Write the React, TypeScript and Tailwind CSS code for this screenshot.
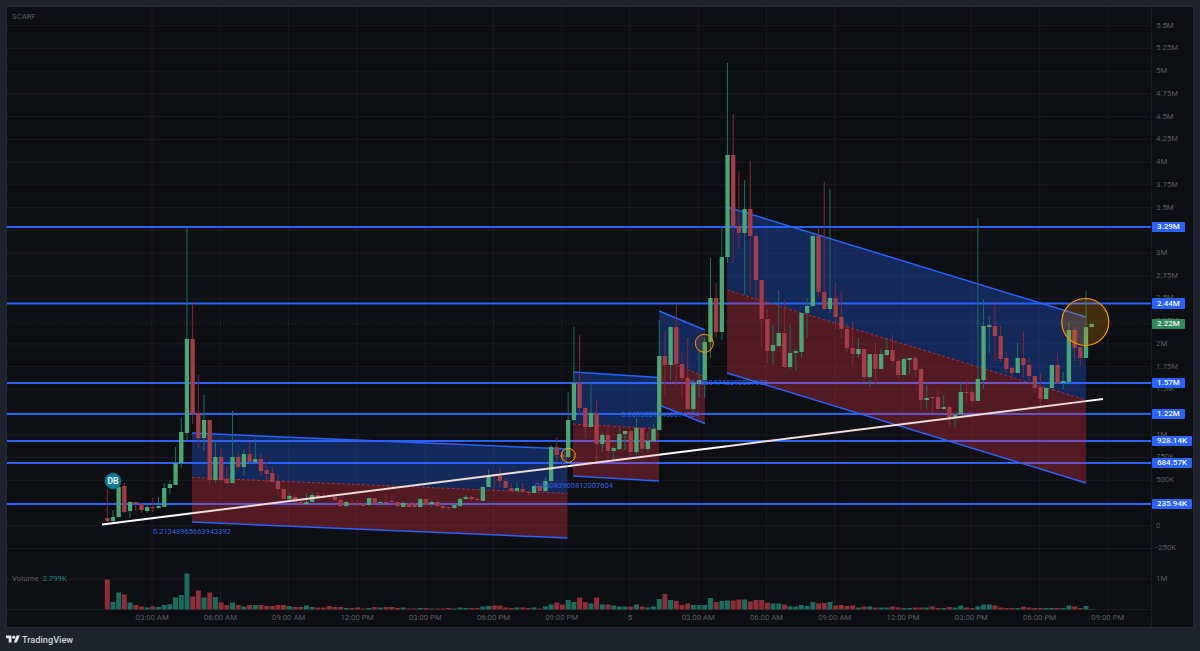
// candle: [high, bodyTop, bodyBottom, low, up] in chart pixels
type Candle = [number, number, number, number, number];

const candles: Candle[] = [
  [489,518,521,522,0],[510,517,521,522,1],[478,487,517,518,1],[483,486,512,513,0],[501,502,511,518,1],
  [502,502,504,511,0],[503,504,510,513,0],[505,507,511,513,1],[498,507,508,512,0],[497,506,508,509,1],
  [483,488,507,507,1],[480,484,488,494,1],[447,463,485,485,1],[418,432,463,468,1],[227,339,433,441,1],
  [302,339,414,424,0],[375,413,438,448,0],[395,420,438,451,1],[420,420,480,485,0],[442,457,480,483,1],
  [449,457,480,482,0],[466,479,483,484,0],[411,457,483,483,1],[452,457,467,470,0],[449,454,467,476,1],
  [442,454,462,463,0],[439,459,462,463,1],[454,459,471,476,0],[462,470,474,483,0],[467,473,482,482,0],
  [475,481,489,494,0],[487,489,499,499,0],[493,496,499,500,1],[495,497,502,503,0],[500,502,504,506,0],
  [493,502,504,505,1],[492,495,502,502,1],[492,495,497,499,0],[493,496,497,499,0],[494,495,497,499,0],
  [495,497,500,501,0],[499,500,506,507,0],[501,502,506,507,1],[499,503,504,506,0],[500,503,504,506,0],
  [503,504,506,506,0],[498,498,505,506,1],[498,498,503,504,0],[500,502,503,504,1],[494,502,503,503,0],
  [494,501,502,502,0],[501,502,506,507,0],[501,503,507,507,1],[503,504,507,507,0],[502,504,507,508,0],
  [498,499,507,507,1],[498,499,504,507,0],[500,502,504,507,1],[501,502,506,507,0],[506,506,508,510,0],
  [507,507,508,511,0],[504,505,508,509,1],[497,499,506,507,1],[495,497,499,500,1],[496,497,499,502,0],
  [497,499,500,501,0],[486,487,501,501,1],[469,475,487,487,1],[473,474,475,490,0],[467,476,481,487,0],
  [478,481,488,488,0],[483,488,491,492,0],[482,488,491,493,1],[483,489,492,493,0],[491,492,493,495,0],
  [485,486,493,493,1],[483,486,491,495,0],[477,481,491,492,1],[445,447,481,482,1],[437,447,455,463,0],
  [450,455,457,466,0],[392,420,457,458,1],[327,383,420,421,1],[335,383,408,415,0],[407,408,427,439,0],
  [383,413,427,427,1],[399,413,444,463,0],[433,435,444,452,1],[423,435,451,460,0],[447,448,451,460,1],
  [428,434,449,450,1],[431,431,434,450,1],[430,431,452,456,0],[418,428,452,455,1],[428,428,449,455,0],
  [433,441,449,453,1],[424,429,441,442,1],[320,356,430,430,1],[331,356,365,395,0],[326,327,365,381,1],
  [304,327,364,387,0],[352,364,378,397,0],[338,378,409,410,0],[380,383,409,413,1],[350,380,384,398,1],
  [338,342,380,398,1],[258,298,342,358,1],[283,298,332,338,0],[228,257,332,340,1],[63,155,257,263,1],
  [114,155,226,263,0],[171,226,233,249,0],[180,209,233,295,1],[161,209,236,295,0],[233,236,280,300,0],
  [280,280,319,347,0],[309,319,351,363,0],[325,345,351,365,1],[290,333,346,347,1],[300,333,367,368,0],
  [325,353,367,369,1],[349,351,353,371,1],[313,313,352,358,1],[298,306,313,338,1],[232,236,306,307,1],
  [227,236,292,298,0],[182,292,309,310,0],[189,298,309,313,1],[282,298,317,329,0],[292,317,329,338,0],
  [324,329,348,352,0],[321,348,354,366,0],[338,349,354,358,1],[349,349,377,382,0],[354,354,377,387,1],
  [343,354,369,384,0],[348,354,369,369,1],[338,350,355,356,1],[335,350,361,365,0],[359,361,375,378,0],
  [357,359,375,375,1],[358,358,360,374,1],[356,358,370,377,0],[368,369,400,409,0],[385,398,400,409,1],
  [397,397,398,413,0],[390,397,409,409,0],[395,407,409,409,1],[406,407,417,426,0],[413,415,418,427,1],
  [383,392,414,415,1],[379,392,393,403,0],[390,392,401,403,0],[218,379,401,401,1],[299,326,380,389,1],
  [316,325,327,353,1],[301,326,336,361,0],[326,336,359,362,0],[352,358,369,373,0],[366,368,373,380,0],
  [343,358,373,373,1],[332,358,365,378,0],[357,365,376,383,0],[376,376,388,393,0],[373,387,399,407,0],
  [387,388,399,399,1],[365,365,388,388,1],[353,365,383,384,0],[372,381,383,389,1],[322,330,382,383,1],
  [327,330,348,361,0],[347,347,358,366,0],[291,327,358,358,1],[324,324,327,327,1],
];

const volumes = [
  30,7.5,17,15,7,4.5,3,2,3,2.5,4.5,5.3,12,14.5,36,13,19,12,17,12.5,7,4.5,7,4.5,3,4.5,4.5,4.5,3.5,3.5,
  4.5,4.5,3.5,2.5,2.5,4,2.5,2,2,3.5,2.5,2.5,1.5,1.5,2,1,1.5,2.5,
  2,2.5,2.5,1.5,2,1,1,1.5,1.5,1,1,1,1.5,1,2,1.5,1.5,1.5,3,3.5,4,4,2,1.5,2,2,1.5,2,1,3,5,7,5,9.5,7.5,12,7.5,6,12,
  5,5,4,3,3,3,5,3,2,3,10.5,15.5,9.5,8.5,4.5,6,4.5,4.5,4.5,11.5,7.5,8.5,9,9,10,10,8,9.5,9.5,7,6,6,5,3,3,4.5,3.5,
  7.5,6,6.5,7.5,4,4.5,3.5,4,2,3,3,2,2,2,3,2,1.5,1.5,2,2,2,3,1.5,1.5,2.5,2,4,2,1.5,3,5,5,4,2,1.5,1.5,1.5,3,2,1.5,
  1.5,1.5,1.5,1.5,1.5,4,3,1.5,3.5,0.5,
];

const barX = (i: number) => 107.3 + i * 5.69;

const gridX = Array.from({ length: 15 }, (_, i) => 152 + i * 68.28);
const priceLabels = [
  "5.5M", "5.25M", "5M", "4.75M", "4.5M", "4.25M", "4M", "3.75M", "3.5M", "3.25M", "3M", "2.75M",
  "2.5M", "2.25M", "2M", "1.75M", "1.5M", "1.25M", "1M", "750K", "500K", "250K", "0", "-250K",
];
const gridY = priceLabels.map((_, i) => 25.7 + i * 22.73);
const timeLabels = [
  "03:00 AM", "06:00 AM", "09:00 AM", "12:00 PM", "03:00 PM", "06:00 PM", "09:00 PM", "5",
  "03:00 AM", "06:00 AM", "09:00 AM", "12:00 PM", "03:00 PM", "06:00 PM", "09:00 PM",
];

const levels = [
  { y: 227, label: "3.29M" },
  { y: 303.5, label: "2.44M" },
  { y: 383, label: "1.57M" },
  { y: 414, label: "1.22M" },
  { y: 441, label: "928.14K" },
  { y: 463, label: "684.57K" },
  { y: 504, label: "235.94K" },
];

// position tools: left x, right x, then top / entry / bottom y at each end
const positions = [
  { x1: 192, x2: 567.5, top: [433, 449], mid: [477.5, 493.5], bot: [522, 538] },
  { x1: 573, x2: 659, top: [372, 377.5], mid: [424, 429], bot: [476, 481] },
  { x1: 659, x2: 705, top: [311, 330], mid: [358, 377], bot: [405, 423.5] },
  { x1: 727, x2: 1086, top: [207, 317], mid: [290, 400], bot: [373, 483] },
];

const notes = [
  { x: 153, y: 534, text: "0.21348965663943392" },
  { x: 535, y: 488, text: "0.06083900812007604" },
  { x: 621.5, y: 416.5, text: "0.26930317460074324" },
  { x: 690, y: 384.5, text: "0.15684748390007600" },
];

const trendY = (x: number) => 524.5 + ((x - 102) * (399 - 524.5)) / (1103 - 102);
const trendSegments: [number, number, string][] = [
  [102, 192, "#ffffff"],
  [192, 567.5, "#f0dcdc"],
  [567.5, 573, "#ffffff"],
  [573, 659, "#f0dcdc"],
  [659, 727, "#ffffff"],
  [727, 1086, "#f0dcdc"],
  [1086, 1103, "#ffffff"],
];

function Chart() {
  return (
    <svg viewBox="7 7 1144 605" className="absolute inset-0 h-full w-full">
      {gridX.map((x) => (
        <line key={x} x1={x} x2={x} y1={7} y2={612} stroke="#1a1b20" strokeWidth={1} />
      ))}
      {gridY.map((y) => (
        <line key={y} x1={7} x2={1151} y1={y} y2={y} stroke="#1a1b20" strokeWidth={1} />
      ))}
      <line x1={7} x2={1151} y1={579} y2={579} stroke="#1a1b20" />
      <line x1={7} x2={1151} y1={609.5} y2={609.5} stroke="#1a1b20" />

      {volumes.map((h, i) => (
        <rect key={i} x={barX(i) - 2.5} y={609.5 - h} width={5} height={h} fill={candles[i][4] ? "#1c6b5c" : "#8c2f3b"} />
      ))}

      {levels.map((l) => (
        <line key={l.y} x1={7} x2={1151} y1={l.y} y2={l.y} stroke="#2962ff" strokeWidth={1.8} />
      ))}
      <line x1={7} x2={1151} y1={323.7} y2={323.7} stroke="#24453a" strokeWidth={0.8} strokeDasharray="1 2" />

      {positions.map((p) => (
        <g key={p.x1}>
          <polygon
            points={`${p.x1},${p.top[0]} ${p.x2},${p.top[1]} ${p.x2},${p.mid[1]} ${p.x1},${p.mid[0]}`}
            fill="#2962ff"
            fillOpacity={0.3}
          />
          <polygon
            points={`${p.x1},${p.mid[0]} ${p.x2},${p.mid[1]} ${p.x2},${p.bot[1]} ${p.x1},${p.bot[0]}`}
            fill="#f23645"
            fillOpacity={0.3}
          />
          <line x1={p.x1} x2={p.x2} y1={p.top[0]} y2={p.top[1]} stroke="#2962ff" strokeWidth={1.5} />
          <line x1={p.x1} x2={p.x2} y1={p.bot[0]} y2={p.bot[1]} stroke="#2962ff" strokeWidth={1.5} />
          <line x1={p.x1} x2={p.x2} y1={p.mid[0]} y2={p.mid[1]} stroke="#a52f3c" strokeWidth={1} strokeDasharray="3 2" />
        </g>
      ))}

      {candles.map(([high, top, bottom, low, up], i) => (
        <g key={i}>
          <line x1={barX(i)} x2={barX(i)} y1={high} y2={low} stroke={up ? "#1d6e5f" : "#7f2c36"} strokeWidth={1} />
          <rect x={barX(i) - 2.15} y={top} width={4.3} height={Math.max(bottom - top, 1)} fill={up ? "#4ba574" : "#a33d48"} />
        </g>
      ))}

      {trendSegments.map(([a, b, c]) => (
        <line key={a} x1={a} x2={b} y1={trendY(a)} y2={trendY(b)} stroke={c} strokeWidth={2} />
      ))}

      {notes.map((n) => (
        <text key={n.x} x={n.x} y={n.y} fontSize={7.5} fill="#2f62e0">
          {n.text}
        </text>
      ))}

      <circle cx={568.3} cy={455.3} r={7} fill="#ff9800" fillOpacity={0.12} stroke="#ff9800" strokeWidth={1} />
      <circle cx={704.3} cy={343.3} r={9} fill="#ff9800" fillOpacity={0.12} stroke="#ff9800" strokeWidth={1} />
      <circle cx={1085.3} cy={322} r={23.5} fill="#ff9800" fillOpacity={0.22} stroke="#ff9800" strokeWidth={1.2} />

      <circle cx={113} cy={481} r={8} fill="#0e7b9b" stroke="#0a5a75" strokeWidth={1} />
      <text x={113} y={484} textAnchor="middle" fontSize={8.5} fontWeight={700} fill="#e6f4f8">
        DB
      </text>
    </svg>
  );
}

function PriceAxis() {
  return (
    <div className="relative w-[42px] shrink-0 border-l border-[#1a1b20] pl-[4px] pt-[7.3px] text-[#585b63]">
      {priceLabels.map((label) => (
        <div key={label} className="flex h-[22.73px] items-center">
          {label}
        </div>
      ))}
      <div className="mt-[7.8px] flex h-[22.73px] items-center">1M</div>

      {levels.map((l) => (
        <div
          key={l.label}
          className="absolute left-0 flex h-[10.5px] items-center rounded-[1px] bg-[#2962ff] px-[5px] text-[8px] font-medium text-[#f2f5ff]"
          style={{ top: l.y - 7 - 5.25 }}
        >
          {l.label}
        </div>
      ))}
      <div className="absolute left-0 top-[311.5px] flex h-[10.5px] items-center rounded-[1px] bg-[#2f8b5f] px-[5px] text-[8px] font-medium text-[#eef7f2]">
        2.22M
      </div>
    </div>
  );
}

export default function App() {
  return (
    <div className="flex h-screen flex-col overflow-hidden bg-[#1e222d] font-['Roboto',sans-serif] text-[7.8px] leading-none">
      <div className="mx-[6px] mt-[6px] flex flex-1 border border-[#272b36] bg-[#0e0f13]">
        <div className="flex flex-1 flex-col">
          <div className="relative flex-1">
            <Chart />
            <div className="absolute left-[5px] top-[5.5px] text-[#585b63]">SCARF</div>
            <div className="absolute left-[5px] top-[568px] flex gap-[4px] text-[#585b63]">
              Volume <span className="text-[#0f8a75]">2.799K</span>
            </div>
          </div>
          <div className="flex h-[15px] items-start pl-[111px] pt-[2px] text-[#585b63]">
            {timeLabels.map((t, i) => (
              <div key={i} className="w-[68.28px] shrink-0 text-center">
                {t}
              </div>
            ))}
          </div>
        </div>
        <PriceAxis />
      </div>
      <div className="flex h-[23px] items-center gap-[2px] px-[6px] text-[#d1d4dc]">
        <svg viewBox="0 0 36 28" className="h-[11px] w-[14px]" fill="#e6e8ee">
          <path d="M14 22H7V11H0V4h14v18zM28 22h-8l7.5-18h8L28 22z" />
          <circle cx="20" cy="8" r="4" />
        </svg>
        <span className="text-[9.2px] font-medium">TradingView</span>
      </div>
    </div>
  );
}
